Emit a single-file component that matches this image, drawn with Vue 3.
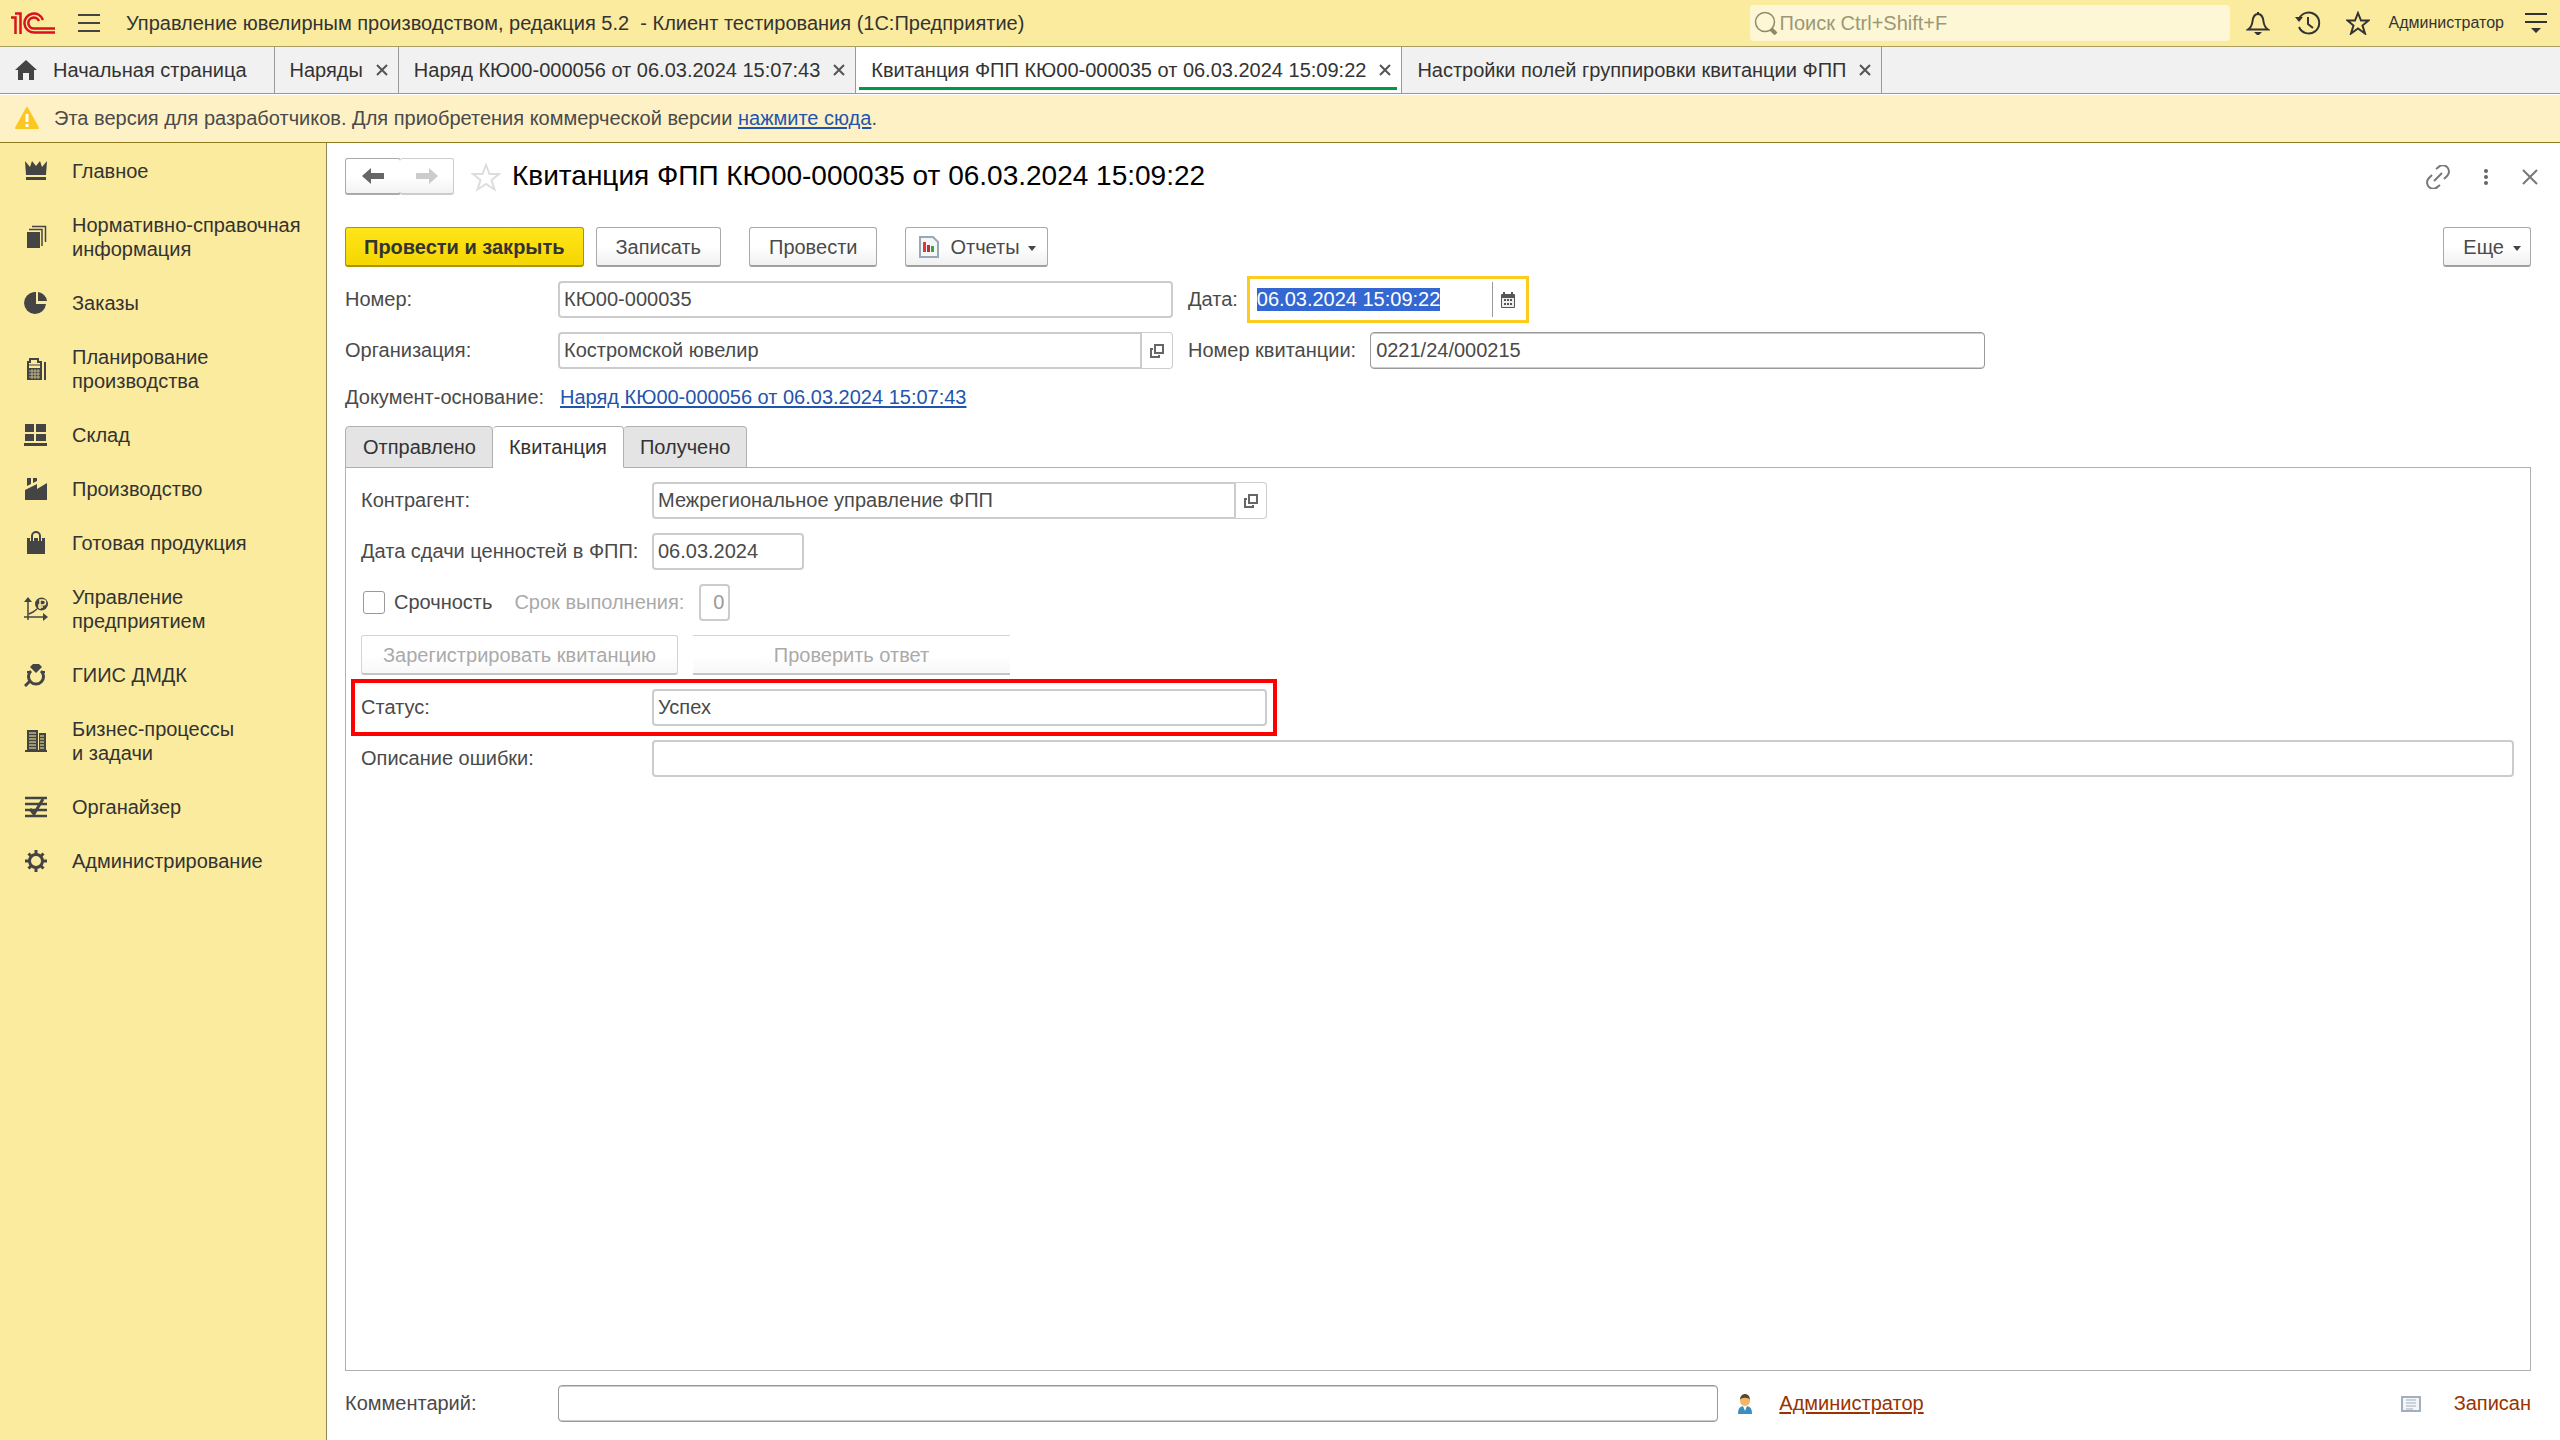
<script setup>
import { ref, onMounted } from 'vue'

const tabs = [
  { title: 'Наряды' },
  { title: 'Наряд КЮ00-000056 от 06.03.2024 15:07:43' },
  { title: 'Квитанция ФПП КЮ00-000035 от 06.03.2024 15:09:22', active: true },
  { title: 'Настройки полей группировки квитанции ФПП' },
]

const sections = [
  { lines: ['Главное'], icon: '<path d="M1 2l5 6 2-6 4 5 4-5 2 6 5-6-1 14H2z M2 18h20v3H2z"/>' },
  { lines: ['Нормативно-справочная', 'информация'], icon: '<path d="M3 7h13v16H3z"/><path d="M5 4.500h13V21M8 1.500h13.500V17" fill="none" stroke="currentColor" stroke-width="1.5"/>' },
  { lines: ['Заказы'], icon: '<path d="M10 1a11 11 0 1 0 12 12H12V1z" /><path d="M14 1a10 10 0 0 1 9 9h-9z"/>' },
  { lines: ['Планирование', 'производства'], icon: '<path d="M3 11h15v12H3z"/><path d="M4 11V5h2V2h8v3h3v7M21 5v18" fill="none" stroke="currentColor" stroke-width="2"/><path d="M5 8h11" stroke="currentColor" stroke-width="1"/><path d="M5 14h11M5 17h11M5 20h11M8 12v10M11 12v10M14 12v10" stroke="#fbeb9e" stroke-width="1" opacity="0.7"/>' },
  { lines: ['Склад'], icon: '<path d="M1 1h9v8H1zM12 1h10v8H12zM1 11h9v7H1zM12 11h10v7H12zM0 20h23v3H0z"/>' },
  { lines: ['Производство'], icon: '<path d="M1 23V13l12-6v5l10-6v17z"/><path d="M3 1h4v6l-4 2zM9 1h4v3L9 6z"/>' },
  { lines: ['Готовая продукция'], icon: '<path d="M3 7h18v16H3z"/><path d="M8 10V5a4 4 0 0 1 8 0v5" fill="none" stroke="#fbeb9e" stroke-width="4"/><path d="M8 10V5a4 4 0 0 1 8 0v5" fill="none" stroke="currentColor" stroke-width="2"/>' },
  { lines: ['Управление', 'предприятием'], icon: '<path d="M4 23V2M0 20h22M5 17l4-2 4-3" fill="none" stroke="currentColor" stroke-width="1.500"/><path d="M0 5l4-5 4 5zM19 16l5 4-5 4z"/><circle cx="17.500" cy="7" r="6.500"/><path d="M16 12V3h3a2 2 0 0 1 0 5h-5M14 10h5" fill="none" stroke="#fbeb9e" stroke-width="1.500"/>' },
  { lines: ['ГИИС ДМДК'], icon: '<path d="M9 1h6l3 3-6 6-6-6z"/><path d="M7 8a7.500 7.500 0 1 0 10 0M7 17l-6 6" fill="none" stroke="currentColor" stroke-width="3"/><path d="M3 9h4M21 9h-4" fill="none" stroke="currentColor" stroke-width="2"/>' },
  { lines: ['Бизнес-процессы', 'и задачи'], icon: '<path d="M3 1h11v21H3zM15 4h7v18h-7zM1 21h22v2H1z"/><path d="M5 4h7M5 7h7M5 10h7M5 13h7M5 16h7M5 19h7M16 7h4M16 10h4M16 13h4M16 16h4M16 19h4" stroke="#fbeb9e" stroke-width="1"/>' },
  { lines: ['Органайзер'], icon: '<path d="M1 3h22M1 9h22M1 15h22M1 21h22" stroke="currentColor" stroke-width="2.500"/><path d="M6 14l4 5L19 4" fill="none" stroke="currentColor" stroke-width="3"/>' },
  { lines: ['Администрирование'], icon: '<circle cx="12" cy="12" r="6.500" fill="none" stroke="currentColor" stroke-width="3"/><path d="M12 1v5M12 18v5M1 12h5M18 12h5M4.500 4.500l3 3M16.500 16.500l3 3M4.500 19.500l3-3M16.500 7.500l3-3" stroke="currentColor" stroke-width="3"/>' },
]

const formTabs = ['Отправлено', 'Квитанция', 'Получено']
const dateField = ref(null)

onMounted(() => {
  dateField.value.focus()
  dateField.value.select()
})
</script>

<template>
  <div class="app">
    <header class="titlebar">
      <svg class="logo" viewBox="0 0 44 22" fill="none" stroke="#d8121e" stroke-width="2.500">
        <path d="M0 5.500h4.500V22M4 1.500h5.500V22M32 8A9.500 9.500 0 1 0 23 20.500H44M28 9A5.500 5.500 0 1 0 23 16.500H44" />
      </svg>
      <button class="icon-btn menu" aria-label="Меню">
        <svg width="22" height="18" viewBox="0 0 22 18" stroke="#444" stroke-width="2"><path d="M0 1h22M0 9h22M0 17h22" /></svg>
      </button>
      <h1 class="app-title">Управление ювелирным производством, редакция 5.2 &nbsp;- Клиент тестирования (1С:Предприятие)</h1>
      <div class="search">
        <svg width="24" height="24" viewBox="0 0 24 24" fill="none" stroke="#8f8a66"><circle cx="11" cy="11" r="9.500" stroke-width="1.500" /><path d="M17 18l5 5" stroke-width="4" /></svg>
        <input type="text" aria-label="Поиск" placeholder="Поиск Ctrl+Shift+F">
      </div>
      <div class="tools">
        <button class="icon-btn" aria-label="Оповещения">
          <svg width="24" height="24" viewBox="0 0 24 24" fill="none" stroke="#333" stroke-width="2"><path d="M12 1v2M2 18.500h20c-3-2-4-4-4.500-8C17 6 15 3 12 3S7 6 6.500 10.500C6 14.500 5 16.500 2 18.500z" /><path d="M8 21h8l-3 3h-2z" fill="#333" stroke="none" /></svg>
        </button>
        <button class="icon-btn" aria-label="История">
          <svg width="26" height="24" viewBox="0 0 26 24" fill="none" stroke="#333" stroke-width="2"><path d="M4 8a10.500 10.500 0 1 1 0 8M13 6v7l5 4" /><path d="M0 6h8l-4 5z" fill="#333" stroke="none" /></svg>
        </button>
        <button class="icon-btn" aria-label="Избранное">
          <svg width="24" height="24" viewBox="0 0 24 24" fill="none" stroke="#333" stroke-width="2"><path d="M12 2l3 7.500h7.500l-6 5 2.500 8-7-5-7 5 2.500-8-6-5H9z" /></svg>
        </button>
        <button class="user">Администратор</button>
        <button class="icon-btn" aria-label="Сервис">
          <svg width="22" height="20" viewBox="0 0 22 20" fill="#333"><path d="M0 0h22v2H0zM0 8h22v2H0zM6 15h10l-5 5z" /></svg>
        </button>
      </div>
    </header>

    <nav class="windows">
      <a class="window home" href="#">
        <svg width="22" height="20" viewBox="0 0 22 20" fill="#444"><path d="M11 0l11 10h-3v10h-5v-7H8v7H3V10H0z" /></svg>
        <span>Начальная страница</span>
      </a>
      <div v-for="t in tabs" :key="t.title" class="window" :class="{ active: t.active }">
        <a href="#">{{ t.title }}</a>
        <button class="icon-btn" aria-label="Закрыть">
          <svg width="12" height="12" viewBox="0 0 12 12" stroke="#555" stroke-width="2"><path d="M1 1l10 10M11 1L1 11" /></svg>
        </button>
      </div>
    </nav>

    <div class="notice">
      <svg width="24" height="22" viewBox="0 0 24 22"><path d="M12 1l11 20H1z" fill="#fcc71e" stroke="#fcc71e" stroke-width="2" stroke-linejoin="round" /><path d="M12 7v8M12 17v3" stroke="#fff" stroke-width="3" /></svg>
      <p>Эта версия для разработчиков. Для приобретения коммерческой версии <a href="#">нажмите сюда</a>.</p>
    </div>

    <div class="body">
      <nav class="sections">
        <a v-for="s in sections" :key="s.lines[0]" href="#" class="section">
          <svg width="24" height="24" viewBox="0 0 24 24" fill="currentColor" v-html="s.icon"></svg>
          <span><span v-for="l in s.lines" :key="l" class="line">{{ l }}</span></span>
        </a>
      </nav>

      <main class="form">
        <div class="caption">
          <div class="history">
            <button aria-label="Назад"><svg width="22" height="16" viewBox="0 0 22 16" fill="#666"><path d="M0 8l9-8v5h13v6H9v5z" /></svg></button>
            <button aria-label="Вперед"><svg width="22" height="16" viewBox="0 0 22 16" fill="#ccc"><path d="M22 8l-9-8v5H0v6h13v5z" /></svg></button>
          </div>
          <button class="icon-btn star" aria-label="В избранное">
            <svg width="30" height="30" viewBox="0 0 30 30" fill="none" stroke="#ddd" stroke-width="2"><path d="M15 3l3.500 9H28l-7.500 6 3 9.500L15 22l-8.500 5.500 3-9.500L2 12h9.500z" /></svg>
          </button>
          <h2>Квитанция ФПП КЮ00-000035 от 06.03.2024 15:09:22</h2>
          <div class="caption-tools">
            <button class="icon-btn" aria-label="Ссылка">
              <svg width="24" height="24" viewBox="0 0 24 24" fill="none" stroke="#777" stroke-width="2"><path d="M8 16l8-8M10 4l2-1.500a6 6 0 0 1 9.500 8L18 14M6 10l-3.500 3.500a6 6 0 0 0 9.500 8l2-1.500" /></svg>
            </button>
            <button class="icon-btn" aria-label="Действия">
              <svg width="6" height="16" viewBox="0 0 6 16" fill="#666"><circle cx="3" cy="2" r="2" /><circle cx="3" cy="8" r="2" /><circle cx="3" cy="14" r="2" /></svg>
            </button>
            <button class="icon-btn" aria-label="Закрыть форму">
              <svg width="16" height="16" viewBox="0 0 16 16" stroke="#777" stroke-width="2"><path d="M1 1l14 14M15 1L1 15" /></svg>
            </button>
          </div>
        </div>

        <div class="commands">
          <button class="cmd primary">Провести и закрыть</button>
          <button class="cmd">Записать</button>
          <button class="cmd spaced">Провести</button>
          <button class="cmd spaced reports">
            <svg width="20" height="22" viewBox="0 0 20 22"><path d="M1 1h13l5 5v15H1z" fill="#f4f7fa" stroke="#9aa7b4" stroke-width="2" /><path d="M4 6h3v10H4z" fill="#e33" /><path d="M8 9h3v7H8z" fill="#b33" /><path d="M12 10h3v6h-3z" fill="#3a3" /></svg>
            Отчеты
            <svg class="caret" width="8" height="5" viewBox="0 0 8 5" fill="#444"><path d="M0 0h8L4 5z" /></svg>
          </button>
          <button class="cmd more">
            Еще
            <svg class="caret" width="8" height="5" viewBox="0 0 8 5" fill="#444"><path d="M0 0h8L4 5z" /></svg>
          </button>
        </div>

        <div class="row">
          <label class="head-label" for="number">Номер:</label>
          <input id="number" class="field wide" value="КЮ00-000035" readonly>
          <label class="second-label" for="date">Дата:</label>
          <div class="date-box">
            <input id="date" ref="dateField" value="06.03.2024 15:09:22">
            <button class="icon-btn" aria-label="Календарь">
              <svg width="14" height="16" viewBox="0 0 14 16" fill="#555"><path d="M1 2h12a1 1 0 0 1 1 1v12a1 1 0 0 1-1 1H1a1 1 0 0 1-1-1V3a1 1 0 0 1 1-1zM2 0h2v3H2zM10 0h2v3h-2z" /><path d="M1 6h12v9H1z" fill="#eee" /><path d="M3 7h2v2H3zM6 7h2v2H6zM9 7h2v2H9zM3 11h2v2H3zM6 11h2v2H6zM9 11h2v2H9z" /></svg>
            </button>
          </div>
        </div>

        <div class="row">
          <label class="head-label" for="org">Организация:</label>
          <div class="combo wide">
            <input id="org" class="field" value="Костромской ювелир" readonly>
            <button aria-label="Открыть организацию"><svg width="14" height="14" viewBox="0 0 14 14" fill="none" stroke="#666" stroke-width="2"><path d="M5 1h8v8H5zM3 5H1v8h8v-2" /></svg></button>
          </div>
          <label class="second-label" for="receipt">Номер квитанции:</label>
          <input id="receipt" class="field wide editable" value="0221/24/000215">
        </div>

        <div class="row base">
          <span class="head-label">Документ-основание:</span>
          <a href="#">Наряд КЮ00-000056 от 06.03.2024 15:07:43</a>
        </div>

        <div class="tabs" role="tablist">
          <button v-for="(t, i) in formTabs" :key="t" role="tab" :aria-selected="i === 1" :class="{ current: i === 1 }">{{ t }}</button>
        </div>

        <section class="panel">
          <div class="row">
            <label class="panel-label" for="partner">Контрагент:</label>
            <div class="combo wide">
              <input id="partner" class="field" value="Межрегиональное управление ФПП" readonly>
              <button aria-label="Открыть контрагента"><svg width="14" height="14" viewBox="0 0 14 14" fill="none" stroke="#666" stroke-width="2"><path d="M5 1h8v8H5zM3 5H1v8h8v-2" /></svg></button>
            </div>
          </div>
          <div class="row">
            <label class="panel-label" for="handed">Дата сдачи ценностей в ФПП:</label>
            <input id="handed" class="field short" value="06.03.2024" readonly>
          </div>
          <div class="row">
            <label class="check"><input type="checkbox"><span>Срочность</span></label>
            <label class="muted" for="term">Срок выполнения:</label>
            <input id="term" class="field tiny" value="0" disabled>
          </div>
          <div class="row actions">
            <button class="cmd" disabled>Зарегистрировать квитанцию</button>
            <button class="cmd open" disabled>Проверить ответ</button>
          </div>
          <div class="row marked">
            <label class="panel-label" for="status">Статус:</label>
            <input id="status" class="field wide" value="Успех" readonly>
          </div>
          <div class="row">
            <label class="panel-label" for="error">Описание ошибки:</label>
            <input id="error" class="field grow" readonly>
          </div>
        </section>

        <footer class="row">
          <label class="head-label" for="comment">Комментарий:</label>
          <input id="comment" class="field grow editable">
          <svg class="person" width="16" height="20" viewBox="0 0 16 20"><path d="M1 20c0-6 2-8 7-8s7 2 7 8z" fill="#3a8fc0" /><path d="M6 12h4l-2 5z" fill="#fff" /><circle cx="8" cy="7" r="5" fill="#f0b766" /><path d="M3 6c0-8 10-8 10 0-1-3-9-3-10 0z" fill="#5a4630" /></svg>
          <a class="author" href="#">Администратор</a>
          <span class="state">
            <svg width="20" height="16" viewBox="0 0 20 16"><path d="M1 1h18v14H1z" fill="#f3f6f9" stroke="#a3afbc" stroke-width="2" /><path d="M5 4h10M5 7h10M5 10h10M5 13h7" stroke="#a3afbc" /></svg>
            <span>Записан</span>
          </span>
        </footer>
      </main>
    </div>
  </div>
</template>

<style>
body {
  margin: 0;
}
</style>

<style scoped>
.app {
  min-height: 100vh;
  display: flex;
  flex-direction: column;
  background: #fff;
  color: #4a4a4a;
  font: 20px/24px "Liberation Sans", Arial, sans-serif;
}
.app * {
  box-sizing: border-box;
}
button,
input {
  margin: 0;
  padding: 0;
  border: 0;
  background: none;
  color: inherit;
  font: inherit;
}
svg {
  display: block;
  flex: none;
}
.icon-btn {
  display: flex;
  align-items: center;
  flex: none;
}
h1,
h2,
p {
  margin: 0;
  font-weight: normal;
}

.titlebar {
  display: flex;
  align-items: center;
  height: 47px;
  padding: 0 13px 0 11px;
  background: #fbeb9e;
  border-bottom: 1px solid #a89d62;
  color: #333;
}
.logo {
  width: 44px;
  height: 22px;
}
.menu {
  margin-left: 23px;
}
.app-title {
  margin-left: 26px;
  font-size: 20px;
}
.search {
  display: flex;
  align-items: center;
  gap: 2px;
  width: 480px;
  height: 36px;
  margin-left: auto;
  padding-left: 4px;
  border-radius: 4px;
  background: #fdf7d6;
}
.search input {
  flex: 1;
  min-width: 0;
}
.search input::placeholder {
  color: #9b9778;
  opacity: 1;
}
.tools {
  display: flex;
  align-items: center;
  gap: 25px;
  margin-left: 16px;
}
.user {
  margin: 0 -4px 0 -6px;
  font-size: 16px;
}

.windows {
  display: flex;
  height: 47px;
  background: #f1f1f1;
  border-bottom: 1px solid #999;
  color: #333;
}
.window {
  display: flex;
  align-items: center;
  gap: 13px;
  padding: 0 10px 0 15px;
  border-right: 1px solid #999;
  color: #333;
}
.window a {
  color: inherit;
  text-decoration: none;
}
.home {
  gap: 16px;
  padding: 0 27px 0 15px;
  text-decoration: none;
}
.active {
  background: linear-gradient(#009846, #009846) 3px 40px / calc(100% - 7px) 3px no-repeat #fff;
}

.notice {
  display: flex;
  align-items: center;
  gap: 15px;
  height: 48px;
  margin-top: 1px;
  padding: 0 15px 1px;
  background: #fef1c5;
  border-bottom: 1px solid #8f7c1e;
}
a {
  color: #1f55ad;
  text-underline-offset: 2px;
  text-decoration-thickness: 2px;
}

.body {
  flex: 1;
  display: flex;
}
.sections {
  flex: none;
  width: 327px;
  padding-top: 1px;
  background: #fbeb9e;
  border-right: 1px solid #8f875a;
}
.section {
  display: flex;
  align-items: center;
  gap: 24px;
  padding: 15px 0 15px 24px;
  color: #444;
  text-decoration: none;
}
.line {
  display: block;
  color: #333;
}

.form {
  flex: 1;
  min-width: 0;
  display: flex;
  flex-direction: column;
  padding: 15px 29px 18px 18px;
}
.form > .row,
.panel > .row {
  margin-top: 14px;
}
.caption {
  display: flex;
  align-items: center;
  height: 37px;
}
.history {
  display: flex;
}
.history button {
  display: flex;
  align-items: center;
  justify-content: center;
  width: 56px;
  height: 37px;
  border: 1px solid #aaa;
  border-bottom: 2px solid #aaa;
  border-radius: 3px;
  background: linear-gradient(#fff 50%, #f2f2f2);
}
.history button + button {
  width: 54px;
  margin-left: -1px;
  border-color: #ccc;
  border-left: 0;
}
.star {
  margin-left: 17px;
}
h2 {
  margin-left: 11px;
  padding-bottom: 2px;
  color: #000;
  font-size: 28px;
  line-height: 32px;
}
.caption-tools {
  display: flex;
  align-items: center;
  gap: 33px;
  margin-left: auto;
  margin-right: -7px;
}

.commands {
  display: flex;
  gap: 12px;
  margin-top: 32px;
}
.cmd {
  display: flex;
  align-items: center;
  justify-content: center;
  height: 40px;
  padding: 0 19px;
  border: 1px solid #aaa;
  border-bottom: 2px solid #a0a0a0;
  border-radius: 3px;
  background: linear-gradient(#fff 50%, #f0f0f0);
}
.primary {
  padding: 0 18px;
  background: linear-gradient(#ffe51a, #f5d600);
  border-color: #a8930a;
  color: #333;
  font-weight: bold;
}
.spaced {
  margin-left: 16px;
}
.reports {
  gap: 11px;
  padding: 0 11px 0 13px;
}
.caret {
  margin-top: 4px;
}
.reports .caret {
  margin-left: -3px;
}
.more {
  gap: 9px;
  margin-left: auto;
  padding: 0 9px 0 19px;
}

.row {
  display: flex;
  align-items: center;
}
.head-label,
.second-label,
.panel-label,
.muted,
.check span,
.author,
.state span,
.base a {
  flex: none;
  padding-bottom: 2px;
}
.head-label {
  width: 213px;
}
.second-label {
  margin-left: 15px;
  margin-right: 14px;
}
.panel-label {
  width: 291px;
}
.field {
  height: 37px;
  padding: 0 4px;
  border: 2px solid #ccc;
  border-radius: 4px;
  background: #fff;
}
.editable {
  padding: 0 5px;
  border: 1px solid #999;
  box-shadow: inset 0 1px #ccc, inset 0 -1px #ccc;
}
.wide {
  width: 615px;
}
.short {
  width: 152px;
}
.tiny {
  width: 31px;
  margin-left: 15px;
  color: #999;
  text-align: right;
}
.grow {
  flex: 1;
  min-width: 0;
}
.combo {
  display: flex;
}
.combo .field {
  flex: 1;
  min-width: 0;
  border-radius: 4px 0 0 4px;
}
.combo button {
  display: flex;
  align-items: center;
  justify-content: center;
  width: 31px;
  border: 1px solid #ccc;
  border-left: 0;
  border-radius: 0 4px 4px 0;
}
.date-box {
  display: flex;
  align-items: center;
  width: 272px;
  height: 37px;
  outline: 3px solid #fccb20;
  outline-offset: 2px;
}
.date-box input {
  flex: 1;
  min-width: 0;
  height: 35px;
  padding-left: 5px;
  border-right: 1px solid #999;
  outline: 0;
}
.date-box input::selection {
  background: #3367d1;
  color: #fff;
}
.date-box button {
  margin: 0 9px 0 8px;
}
.base {
  height: 29px;
}
.base a {
  margin-left: 2px;
}

.tabs {
  display: flex;
  margin-top: 14px;
}
.tabs button {
  height: 42px;
  margin-bottom: -1px;
  padding: 0 16px;
  border: 1px solid #b0b0b0;
  border-left-width: 0;
  border-radius: 4px 4px 0 0;
  background: #e4e4e4;
  color: #333;
}
.tabs button:first-child {
  padding-left: 17px;
  border-left-width: 1px;
}
.tabs .current {
  position: relative;
  border-bottom-color: #fff;
  background: #fff;
}
.panel {
  flex: 1;
  padding: 0 16px 14px 15px;
  border: 1px solid #b0b0b0;
}
.check {
  display: flex;
  align-items: center;
  gap: 9px;
}
.check input {
  appearance: none;
  width: 22px;
  height: 23px;
  margin-left: 2px;
  border: 1px solid #999;
  border-radius: 3px;
}
.muted {
  margin-left: 22px;
  color: #aaa;
}
.actions {
  gap: 15px;
}
.actions .cmd {
  width: 317px;
  border-color: #d4d4d4;
  border-bottom-color: #c4c4c4;
  background: linear-gradient(#fff 50%, #f8f8f8);
  color: #aaa;
}
.actions .open {
  border-left: 0;
  border-right: 0;
  border-radius: 0;
}
.marked {
  width: fit-content;
  outline: 4px solid #f00;
  outline-offset: 6px;
}
.person {
  margin-left: 19px;
}
.author {
  margin-left: 26px;
  color: #993300;
}
.state {
  display: flex;
  align-items: center;
  gap: 33px;
  margin-left: 477px;
  color: #993300;
}
</style>
